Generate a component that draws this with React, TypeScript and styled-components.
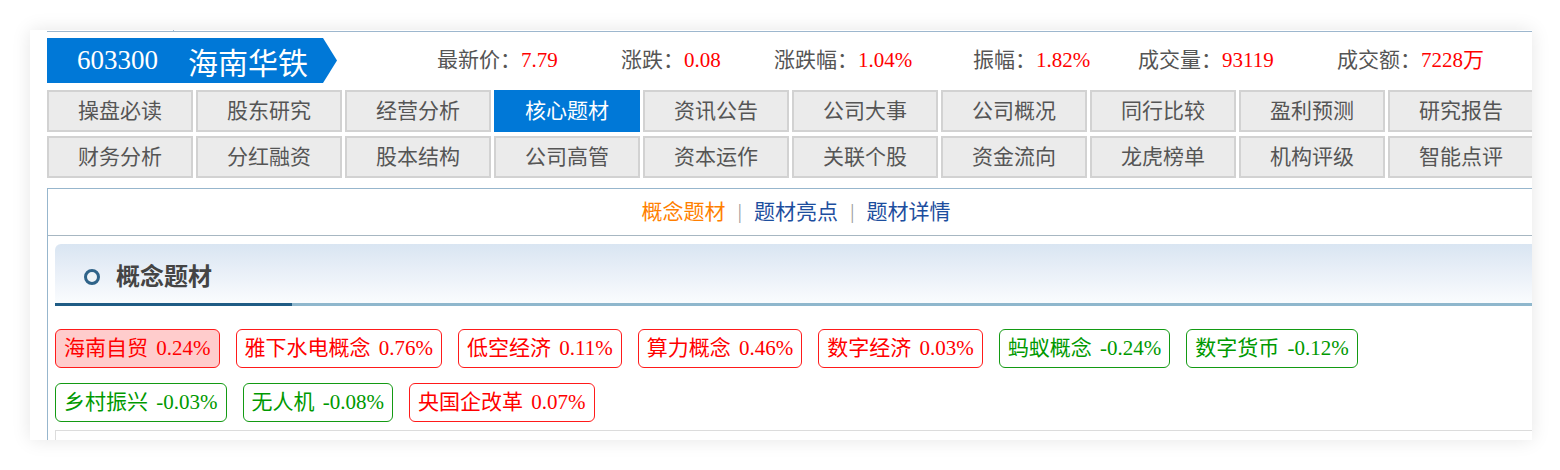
import React from "react";
import styled, { createGlobalStyle } from "styled-components";

const GlobalStyle = createGlobalStyle`
  html, body { margin: 0; padding: 0; background: #ffffff; }
  body { font-family: "Liberation Serif", "Noto Sans CJK SC", serif; }
`;

const Page = styled.div`
  padding: 30px;
`;

const Card = styled.div`
  width: 1502px;
  height: 410px;
  overflow: hidden;
  background: #ffffff;
  box-shadow: 0 0 18px rgba(0, 0, 0, 0.1);
`;

const Inner = styled.div`
  width: 1498px;
  padding-left: 17px;
`;

const TopStrip = styled.div`
  height: 1px;
  border-bottom: 1px solid #9db7ce;
  display: flex;
`;

const TopCell = styled.div`
  width: 126px;
  border-right: 1px solid #9db7ce;
`;

const Header = styled.div`
  display: flex;
  align-items: center;
  height: 45px;
  margin-top: 6px;
`;

const Banner = styled.div`
  flex: none;
  width: 290px;
  height: 45px;
  box-sizing: border-box;
  padding-left: 30px;
  background: #0078d7;
  clip-path: polygon(0 0, 276px 0, 290px 50%, 276px 100%, 0 100%);
  display: flex;
  align-items: center;
  color: #ffffff;
`;

const Code = styled.span`
  font-family: "Liberation Serif", serif;
  font-size: 27px;
  line-height: 1;
`;

const Name = styled.span`
  font-family: "Noto Sans CJK SC", sans-serif;
  font-size: 30px;
  line-height: 1;
  margin-left: 30px;
`;

const Stats = styled.div`
  display: flex;
  margin-left: 100px;
  font-size: 21px;
  line-height: 1;
  color: #555555;
`;

const Stat = styled.div<{ $w?: number }>`
  flex: none;
  white-space: nowrap;
  width: ${(p) => (p.$w ? `${p.$w}px` : "auto")};
`;

const Val = styled.span`
  color: #ff0000;
`;

const Nav = styled.div`
  margin-top: 7px;
  display: grid;
  grid-template-columns: repeat(10, 146px);
  column-gap: 3px;
  row-gap: 4px;
`;

const NavBtn = styled.div<{ $active?: boolean }>`
  height: 42px;
  box-sizing: border-box;
  padding-bottom: 3px;
  border: 2px solid ${(p) => (p.$active ? "#0078d7" : "#d2d2d2")};
  background: ${(p) => (p.$active ? "#0078d7" : "#ebebeb")};
  color: ${(p) => (p.$active ? "#ffffff" : "#555555")};
  display: flex;
  align-items: center;
  justify-content: center;
  font-family: "Noto Sans CJK SC", sans-serif;
  font-size: 21px;
  line-height: 1;
`;

const Panel = styled.div`
  margin-top: 10px;
  width: 1498px;
  box-sizing: border-box;
  border: 1px solid #97b6cd;
  border-bottom: none;
`;

const Tabs = styled.div`
  height: 47px;
  box-sizing: border-box;
  padding-bottom: 4px;
  border-bottom: 1px solid #a7b7c2;
  display: flex;
  align-items: center;
  justify-content: center;
  font-family: "Noto Sans CJK SC", sans-serif;
  font-size: 21px;
  line-height: 1;
`;

const Tab = styled.span<{ $active?: boolean }>`
  color: ${(p) => (p.$active ? "#ff7f00" : "#1d4e9e")};
`;

const Sep = styled.span`
  color: #a0a0a0;
  font-size: 17px;
  margin: 0 12px;
`;

const Section = styled.div`
  padding: 8px 7px 0;
`;

const TitleBar = styled.div`
  height: 59px;
  box-sizing: border-box;
  padding-top: 2px;
  border-top-left-radius: 6px;
  background: linear-gradient(to bottom, #d9e5f2 0%, #eaf0f8 50%, #fafcfe 100%);
  display: flex;
  align-items: center;
`;

const Ring = styled.span`
  flex: none;
  width: 16px;
  height: 16px;
  box-sizing: border-box;
  border-radius: 50%;
  border: 3px solid #2f6389;
  background: #eef3f7;
  margin-left: 29px;
  margin-top: 4px;
`;

const Title = styled.h3`
  margin: 0 0 0 16px;
  font-family: "Noto Sans CJK SC", sans-serif;
  font-size: 24px;
  font-weight: bold;
  line-height: 1;
  color: #444444;
`;

const Underline = styled.div`
  height: 3px;
  background: linear-gradient(to right, #1f5c85 0, #1f5c85 237px, #8fb7cd 237px);
`;

const Tags = styled.div`
  margin-top: 23px;
  max-width: 1340px;
  display: flex;
  flex-wrap: wrap;
  column-gap: 16px;
  row-gap: 15px;
`;

const Tag = styled.span<{ $up: boolean; $hl?: boolean }>`
  height: 39px;
  box-sizing: border-box;
  padding: 0 8px;
  display: inline-flex;
  align-items: center;
  border: 1px solid ${(p) => (p.$up ? "#ff1a1a" : "#139a13")};
  border-radius: 6px;
  background: ${(p) => (p.$hl ? "#ffcccc" : "#ffffff")};
  color: ${(p) => (p.$up ? "#ff0000" : "#009900")};
  font-size: 21px;
  line-height: 1;
  word-spacing: 3px;
  white-space: nowrap;
`;

const NextBox = styled.div`
  margin-top: 8px;
  height: 30px;
  border-top: 1px solid #dcdcdc;
  border-left: 1px solid #dcdcdc;
`;

const stats: { label: string; value: string; w?: number }[] = [
  { label: "最新价：", value: "7.79", w: 184 },
  { label: "涨跌：", value: "0.08", w: 153 },
  { label: "涨跌幅：", value: "1.04%", w: 199 },
  { label: "振幅：", value: "1.82%", w: 165 },
  { label: "成交量：", value: "93119", w: 199 },
  { label: "成交额：", value: "7228万" },
];

const navItems = [
  "操盘必读", "股东研究", "经营分析", "核心题材", "资讯公告",
  "公司大事", "公司概况", "同行比较", "盈利预测", "研究报告",
  "财务分析", "分红融资", "股本结构", "公司高管", "资本运作",
  "关联个股", "资金流向", "龙虎榜单", "机构评级", "智能点评",
];

const tabs = ["概念题材", "题材亮点", "题材详情"];

const tags: { name: string; pct: string; hl?: boolean }[] = [
  { name: "海南自贸", pct: "0.24%", hl: true },
  { name: "雅下水电概念", pct: "0.76%" },
  { name: "低空经济", pct: "0.11%" },
  { name: "算力概念", pct: "0.46%" },
  { name: "数字经济", pct: "0.03%" },
  { name: "蚂蚁概念", pct: "-0.24%" },
  { name: "数字货币", pct: "-0.12%" },
  { name: "乡村振兴", pct: "-0.03%" },
  { name: "无人机", pct: "-0.08%" },
  { name: "央国企改革", pct: "0.07%" },
];

export default function App() {
  return (
    <>
      <GlobalStyle />
      <Page>
        <Card>
          <Inner>
            <TopStrip>
              <TopCell />
            </TopStrip>
            <Header>
              <Banner>
                <Code>603300</Code>
                <Name>海南华铁</Name>
              </Banner>
              <Stats>
                {stats.map((s) => (
                  <Stat key={s.label} $w={s.w}>
                    {s.label}
                    <Val>{s.value}</Val>
                  </Stat>
                ))}
              </Stats>
            </Header>
            <Nav>
              {navItems.map((n) => (
                <NavBtn key={n} $active={n === "核心题材"}>
                  {n}
                </NavBtn>
              ))}
            </Nav>
            <Panel>
              <Tabs>
                {tabs.map((t, i) => (
                  <React.Fragment key={t}>
                    {i > 0 && <Sep>|</Sep>}
                    <Tab $active={i === 0}>{t}</Tab>
                  </React.Fragment>
                ))}
              </Tabs>
              <Section>
                <TitleBar>
                  <Ring />
                  <Title>概念题材</Title>
                </TitleBar>
                <Underline />
                <Tags>
                  {tags.map((t) => (
                    <Tag key={t.name} $up={!t.pct.startsWith("-")} $hl={t.hl}>
                      {t.name} {t.pct}
                    </Tag>
                  ))}
                </Tags>
                <NextBox />
              </Section>
            </Panel>
          </Inner>
        </Card>
      </Page>
    </>
  );
}
